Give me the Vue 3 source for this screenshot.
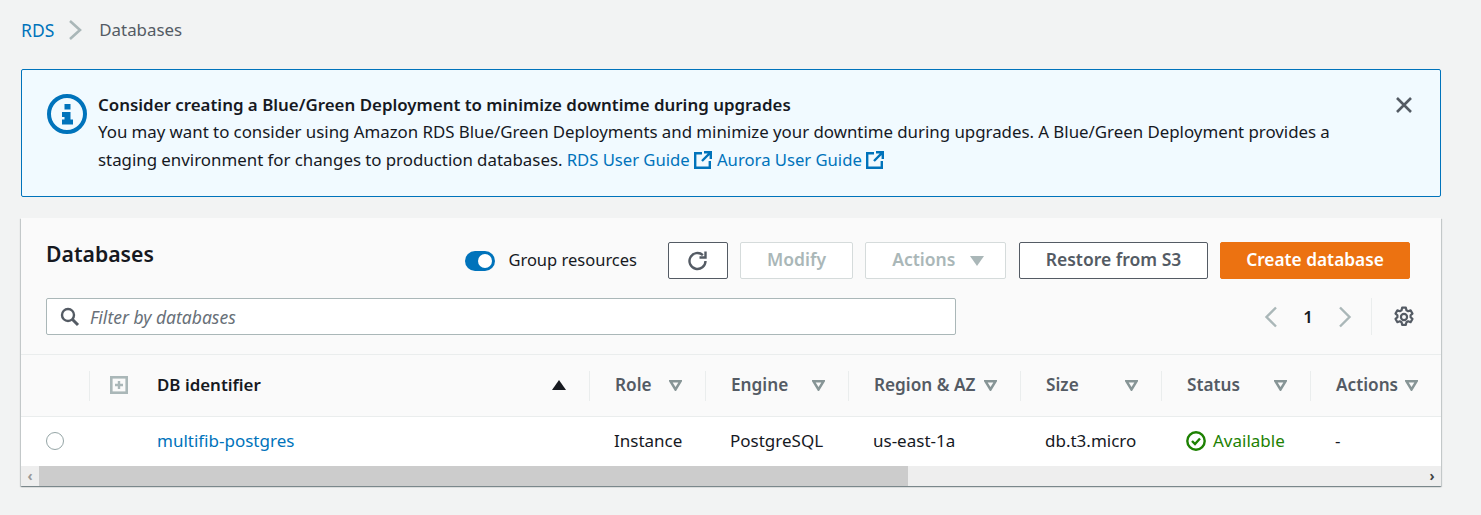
<script setup>
const columns = [
  { label: 'Role', value: 'Instance' },
  { label: 'Engine', value: 'PostgreSQL' },
  { label: 'Region & AZ', value: 'us-east-1a' },
  { label: 'Size', value: 'db.t3.micro' },
  { label: 'Status', value: 'Available', status: true },
  { label: 'Actions', value: '-' },
]
</script>

<template>
  <div class="page">
    <nav class="crumbs">
      <a class="link crumb-root">RDS</a>
      <svg class="crumb-sep" width="16" height="22" viewBox="0 0 16 22"><path d="M3 2l10 9-10 9" fill="none" stroke="#aab7b8" stroke-width="2.6" /></svg>
      <span class="crumb-current">Databases</span>
    </nav>

    <div class="alert">
      <svg class="alert-icon" width="40" height="40" viewBox="0 0 40 40">
        <circle cx="20" cy="20" r="18" fill="none" stroke="#0073bb" stroke-width="4" />
        <rect x="17.5" y="10" width="6" height="5.5" fill="#0073bb" />
        <path d="M15 18h8.500v7.500h2.500v5H15v-5h2.500v-2.500H15z" fill="#0073bb" />
      </svg>
      <div class="alert-body">
        <div class="alert-title">Consider creating a Blue/Green Deployment to minimize downtime during upgrades</div>
        <p class="alert-text">
          You may want to consider using Amazon RDS Blue/Green Deployments and minimize your downtime during upgrades. A Blue/Green Deployment provides a staging environment for changes to production databases.
          <a class="link guide">RDS User Guide
            <svg class="ext" width="18" height="18" viewBox="0 0 18 18"><path d="M8 2.200H1.200v14.600h14.600V10M10 1.200h6.800V8M16.800 1.200L8 10" fill="none" stroke="#0073bb" stroke-width="2.400" /></svg></a>
          <a class="link guide">Aurora User Guide
            <svg class="ext" width="18" height="18" viewBox="0 0 18 18"><path d="M8 2.200H1.200v14.600h14.600V10M10 1.200h6.800V8M16.800 1.200L8 10" fill="none" stroke="#0073bb" stroke-width="2.400" /></svg></a>
        </p>
      </div>
      <svg class="alert-close" width="18" height="18" viewBox="0 0 18 18"><path d="M2 2l14 14M16 2L2 16" fill="none" stroke="#545b64" stroke-width="2.600" /></svg>
    </div>

    <section class="panel">
      <header class="panel-head">
        <div class="toolbar">
          <h2 class="panel-title">Databases</h2>
          <div class="toggle"><span class="toggle-knob"></span></div>
          <span class="toggle-label">Group resources</span>
          <button class="btn btn-icon">
            <svg width="22" height="22" viewBox="0 0 22 22"><path d="M18.500 11a8 8 0 1 1-2.600-5.900" fill="none" stroke="#545b64" stroke-width="2.400" /><path d="M18.500 1.500v6h-6" fill="none" stroke="#545b64" stroke-width="2.400" /></svg>
          </button>
          <button class="btn btn-off btn-modify">Modify</button>
          <button class="btn btn-off btn-actions">Actions <span class="caret-solid"></span></button>
          <button class="btn btn-restore">Restore from S3</button>
          <button class="btn btn-primary">Create database</button>
        </div>
        <div class="filter-row">
          <div class="search">
            <svg width="20" height="20" viewBox="0 0 20 20"><circle cx="8" cy="8" r="6" fill="none" stroke="#545b64" stroke-width="2.400" /><path d="M12.500 12.500l5.500 5.500" stroke="#545b64" stroke-width="3" /></svg>
            <span class="search-text">Filter by databases</span>
          </div>
          <div class="pager">
            <svg width="14" height="22" viewBox="0 0 14 22"><path d="M12 1.500L2.500 11l9.500 9.500" fill="none" stroke="#aab7b8" stroke-width="2.400" /></svg>
            <span class="page-num">1</span>
            <svg width="14" height="22" viewBox="0 0 14 22"><path d="M2 1.500l9.500 9.500L2 20.500" fill="none" stroke="#aab7b8" stroke-width="2.400" /></svg>
          </div>
          <div class="settings">
            <svg width="22" height="22" viewBox="0 0 20 20">
              <path d="M8.300 1.500h3.400l.5 2.300 1.600.9 2.200-.8 1.700 3-1.700 1.500v1.800l1.700 1.500-1.700 3-2.200-.8-1.600.9-.5 2.300H8.300l-.5-2.300-1.600-.9-2.200.8-1.700-3 1.700-1.500V8.400L2.300 6.900l1.700-3 2.200.8 1.600-.9z" fill="none" stroke="#545b64" stroke-width="2" stroke-linejoin="round" />
              <circle cx="10" cy="10" r="2.800" fill="none" stroke="#545b64" stroke-width="2" />
            </svg>
          </div>
        </div>
      </header>

      <div class="grid grid-head">
        <div class="hcell hcell-first"></div>
        <div class="hcell hcell-id sep">
          <svg class="expand" width="18" height="18" viewBox="0 0 18 18"><rect x="1.300" y="1.300" width="15.400" height="15.400" fill="none" stroke="#aab7b8" stroke-width="2.600" /><path d="M9 5v8M5 9h8" stroke="#aab7b8" stroke-width="2.400" /></svg>
          <span class="hlabel-strong">DB identifier</span>
          <span class="sort-up"></span>
        </div>
        <div v-for="col in columns" :key="col.label" class="hcell sep">
          <span>{{ col.label }}</span>
          <svg width="13" height="11" viewBox="0 0 13 11"><path d="M1.500 1.300h10L6.500 9.500z" fill="none" stroke="#879596" stroke-width="2.500" /></svg>
        </div>
      </div>

      <div class="grid grid-row">
        <div class="cell"><span class="radio"></span></div>
        <div class="cell cell-id"><a class="link">multifib-postgres</a></div>
        <div v-for="col in columns" :key="col.label" class="cell" :class="{ 'cell-status': col.status }">
          <svg v-if="col.status" width="20" height="20" viewBox="0 0 20 20"><circle cx="10" cy="10" r="8.700" fill="none" stroke="#1d8102" stroke-width="2.400" /><path d="M6 10l3 3 5-5.500" fill="none" stroke="#1d8102" stroke-width="2.400" /></svg>
          <span>{{ col.value }}</span>
        </div>
      </div>

      <div class="scrollbar">
        <span class="scroll-arrow">‹</span>
        <div class="scroll-thumb"></div>
        <span class="scroll-arrow scroll-arrow-right">›</span>
      </div>
    </section>
  </div>
</template>

<style>
body {
  background: #f2f3f3;
}
</style>

<style scoped>
.page {
  height: 515px;
  box-sizing: border-box;
  padding: 0 40px 0 21px;
  overflow: hidden;
  background: #f2f3f3;
  color: #16191f;
  font-family: "Noto Sans", sans-serif;
  font-size: 16.88px;
  line-height: 28px;
}

.link {
  color: #0073bb;
  text-decoration: none;
}

.crumbs {
  display: flex;
  align-items: center;
  height: 69px;
  padding-bottom: 9px;
  box-sizing: border-box;
}

.crumb-root {
  font-size: 17.5px;
}

.crumb-sep {
  margin: 0 16px 0 13px;
}

.crumb-current {
  color: #545b64;
}

.alert {
  display: flex;
  height: 128px;
  box-sizing: border-box;
  padding: 21px 27px 0 25px;
  border: 1px solid #0073bb;
  border-radius: 2px;
  background: #f1faff;
}

.alert-icon {
  flex: none;
  margin: 3px 11px 0 0;
}

.alert-body {
  flex: 1;
}

.alert-title {
  margin-bottom: -1px;
  font-weight: 600;
  font-size: 16.9px;
}

.alert-text {
  margin: 0;
  word-spacing: -0.15px;
}

.guide {
  font-size: 16.7px;
}

.ext {
  margin-right: 5px;
  vertical-align: -3px;
}

.alert-close {
  flex: none;
  margin: 5px 0 0 48px;
}

.panel {
  margin-top: 21px;
  background: #fff;
  box-shadow: 0 1px 1px 0 rgba(0, 28, 36, 0.3), 1px 1px 1px 0 rgba(0, 28, 36, 0.15), -1px 1px 1px 0 rgba(0, 28, 36, 0.15);
}

.panel-head {
  height: 137px;
  box-sizing: border-box;
  padding: 24px 26px 0 25px;
  background: #fafafa;
  border-bottom: 1px solid #eaeded;
}

.toolbar {
  display: flex;
  align-items: center;
  height: 37px;
  margin-right: 5px;
}

.panel-title {
  margin: 0 auto 13px 0;
  font-size: 21.2px;
  font-weight: 600;
}

.toggle {
  width: 30px;
  height: 20px;
  box-sizing: border-box;
  padding: 3px 3px 3px 13px;
  border-radius: 10px;
  background: #0073bb;
}

.toggle-knob {
  display: block;
  width: 14px;
  height: 14px;
  border-radius: 50%;
  background: #fff;
}

.toggle-label {
  margin: -2px 31px 0 13px;
  font-size: 16.5px;
}

.btn {
  height: 37px;
  box-sizing: border-box;
  margin-left: 12px;
  padding: 0 0 3px;
  border: 1px solid #545b64;
  border-radius: 2px;
  background: #fff;
  color: #545b64;
  font-family: inherit;
  font-size: 17.5px;
  font-weight: 600;
}

.btn-icon {
  width: 60px;
  margin-left: 0;
  padding: 0;
  display: flex;
  align-items: center;
  justify-content: center;
}

.btn-off {
  border-color: #d5dbdb;
  color: #aab7b8;
}

.btn-modify {
  width: 113px;
}

.btn-actions {
  width: 141px;
  padding-left: 5px;
}

.btn-restore {
  width: 189px;
  margin-left: 13px;
}

.btn-primary {
  width: 190px;
  border-color: #ec7211;
  background: #ec7211;
  color: #fff;
  font-size: 17.3px;
}

.caret-solid {
  display: inline-block;
  margin-left: 10px;
  border-style: solid;
  border-width: 10px 7px 0;
  border-color: #aab7b8 transparent transparent;
}

.filter-row {
  display: flex;
  align-items: center;
  margin-top: 19px;
}

.search {
  display: flex;
  align-items: center;
  gap: 10px;
  width: 910px;
  height: 37px;
  box-sizing: border-box;
  padding-left: 13px;
  border: 1px solid #aab7b8;
  border-radius: 2px;
  background: #fff;
  font-size: 17.5px;
}

.search-text {
  color: #687078;
  font-style: italic;
}

.pager {
  display: flex;
  align-items: center;
  margin-left: auto;
}

.page-num {
  margin: 0 25px;
  font-weight: 600;
}

.settings {
  display: flex;
  align-items: center;
  height: 37px;
  margin-left: 19px;
  padding-left: 21px;
  border-left: 1px solid #eaeded;
}

.grid {
  display: grid;
  grid-template-columns: 68px 500px 116px 143px 172px 141px 149px 131px;
}

.grid-head {
  height: 62px;
  background: #fafafa;
  border-bottom: 1px solid #eaeded;
  box-sizing: border-box;
  align-items: center;
}

.hcell {
  display: flex;
  align-items: center;
  justify-content: space-between;
  height: 30px;
  box-sizing: border-box;
  padding: 0 23px 1px 25px;
  color: #545b64;
  font-size: 17.2px;
  font-weight: 600;
}

.sep {
  border-left: 1px solid #eaeded;
}

.hcell-id {
  justify-content: flex-start;
  padding-left: 20px;
}

.expand {
  margin-right: 29px;
}

.hlabel-strong {
  color: #16191f;
  font-size: 16.9px;
}

.sort-up {
  margin-left: auto;
  border-style: solid;
  border-width: 0 7px 10px;
  border-color: transparent transparent #16191f;
}

.grid-row {
  height: 49px;
  box-sizing: border-box;
  padding-bottom: 2px;
  align-items: center;
  background: #fff;
  font-size: 17px;
}

.cell {
  padding-left: 25px;
}

.radio {
  display: block;
  width: 18px;
  height: 18px;
  box-sizing: border-box;
  border: 1px solid #95a5a6;
  border-radius: 50%;
}

.cell-id {
  padding-left: 68px;
}

.cell-status {
  display: flex;
  align-items: center;
  gap: 7px;
  color: #1d8102;
}

.scrollbar {
  display: flex;
  align-items: center;
  height: 20px;
  background: #eeeeee;
  color: #999;
  font-size: 14px;
  font-weight: 700;
}

.scroll-arrow {
  width: 18px;
  text-align: center;
}

.scroll-arrow-right {
  margin-left: auto;
  color: #444;
}

.scroll-thumb {
  width: 869px;
  height: 100%;
  background: #cccccc;
}
</style>
